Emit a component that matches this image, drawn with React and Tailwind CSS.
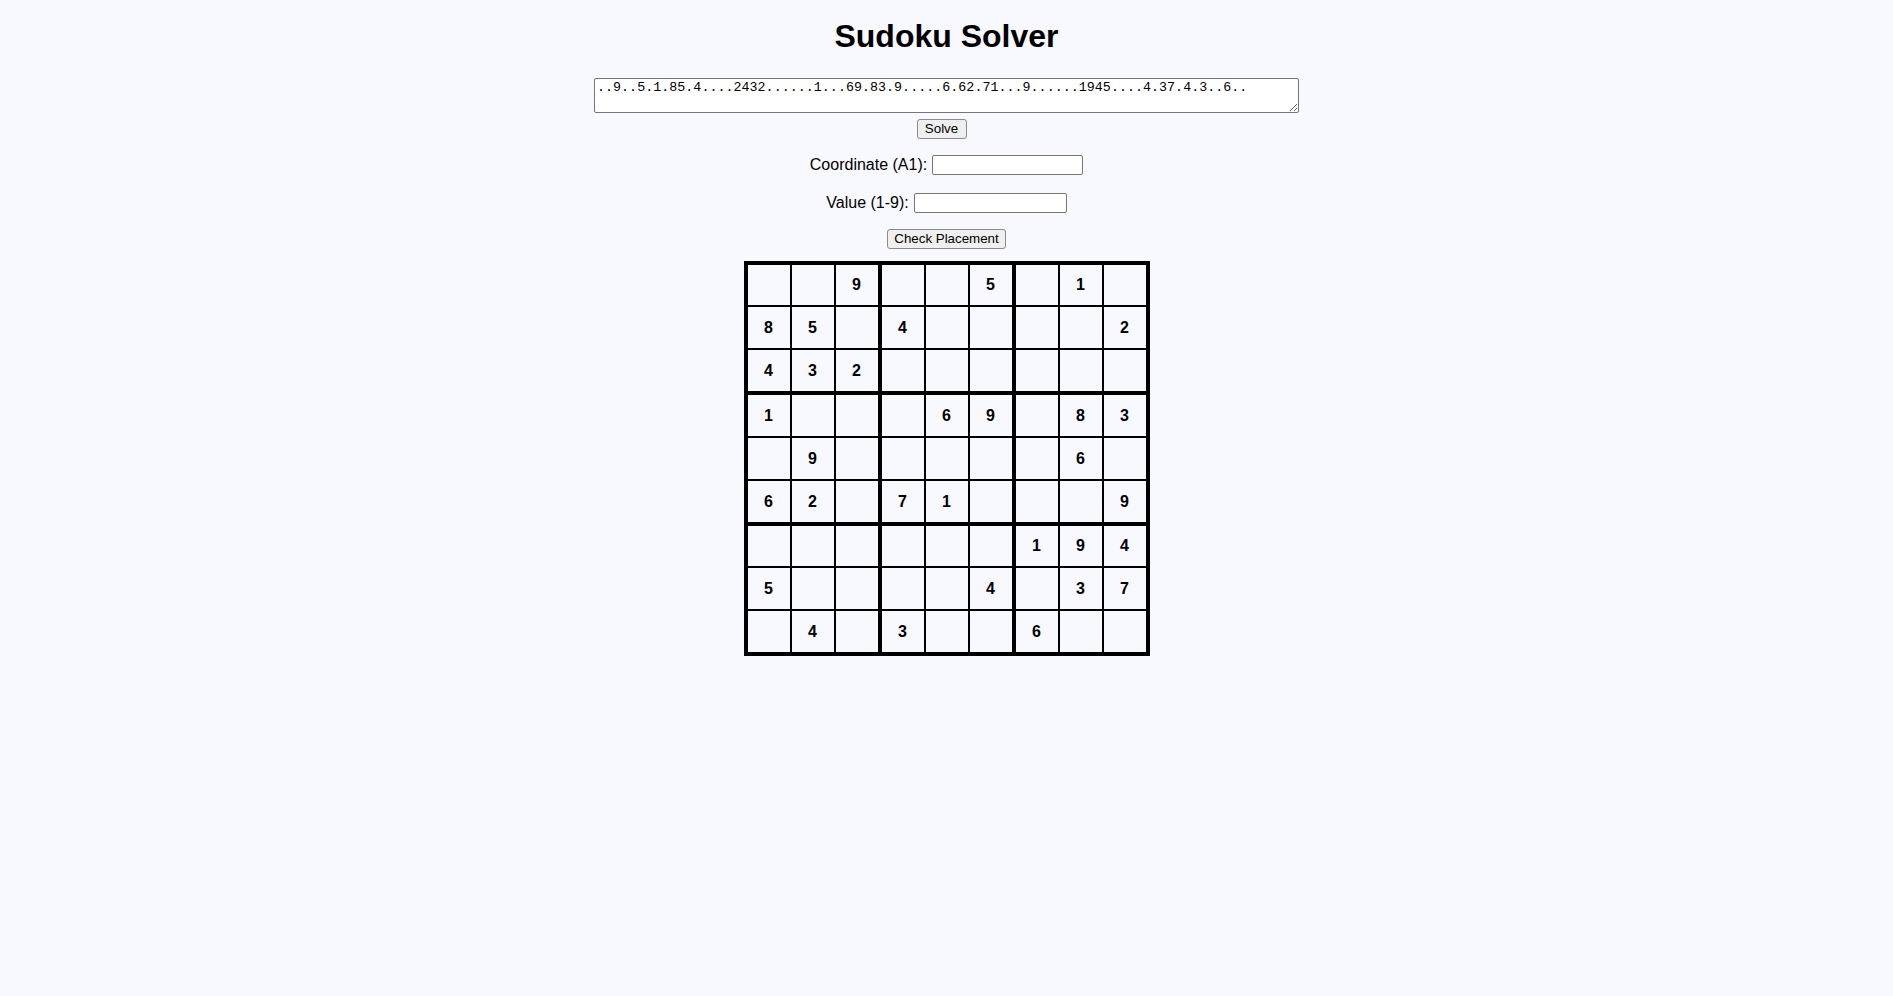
import React, { useState } from "react";

const puzzle =
  "..9..5.1.85.4....2432......1...69.83.9.....6.62.71...9......1945....4.37.4.3..6..";

const rowHeights = ["h-[40px]", "h-[41px]", "h-[41px]", "h-[41px]", "h-[41px]", "h-[41px]", "h-[40px]", "h-[41px]", "h-[41px]"];

const Cell = ({ value, row, col }) => {
  // thick borders between the 3x3 boxes
  let right = "border-r-2";
  if (col === 2 || col === 5) right = "border-r-4";
  if (col === 8) right = "border-r-0";
  let bottom = "border-b-2";
  if (row === 2 || row === 5) bottom = "border-b-4";
  if (row === 8) bottom = "border-b-0";

  return (
    <div
      className={`w-[42px] box-content ${rowHeights[row]} ${right} ${bottom} border-black flex items-center justify-center text-[16px] font-bold`}
    >
      {value === "." ? "" : value}
    </div>
  );
};

const App = () => {
  const [text, setText] = useState(puzzle);
  const [coordinate, setCoordinate] = useState("");
  const [value, setValue] = useState("");

  const rows = [];
  for (let r = 0; r < 9; r++) {
    rows.push(puzzle.slice(r * 9, r * 9 + 9).split(""));
  }

  return (
    <div className="min-h-screen bg-[#f8f8ff] text-black font-['Liberation_Sans',Arial,sans-serif] flex flex-col items-center">
      <h1 className="text-[32px] leading-[37px] font-bold mt-[18px]">Sudoku Solver</h1>

      {/* puzzle string */}
      <textarea
        value={text}
        onChange={(e) => setText(e.target.value)}
        rows="2"
        className="mt-[23px] w-[705px] h-[35px] bg-white border border-[#767676] rounded-[2px] px-[2px] py-[1px] font-['Liberation_Mono',monospace] text-[13.3px] leading-[15px] tracking-[0.05px] resize-y outline-none"
      ></textarea>

      <button className="mt-[6px] mr-[10px] w-[50px] h-[20px] bg-[#efefef] border border-[#8a8a8a] rounded-[3px] text-[13.33px] leading-[16px]">
        Solve
      </button>

      {/* placement check */}
      <div className="mt-[16px] flex items-center gap-[5px] text-[16px] leading-[20px]">
        <label htmlFor="coord">Coordinate (A1):</label>
        <input
          id="coord"
          value={coordinate}
          onChange={(e) => setCoordinate(e.target.value)}
          className="w-[151px] h-[20px] bg-white border border-[#767676] rounded-[2px] outline-none text-[13.33px] px-[2px]"
        />
      </div>

      <div className="mt-[18px] flex items-center gap-[5px] text-[16px] leading-[20px]">
        <label htmlFor="val">Value (1-9):</label>
        <input
          id="val"
          value={value}
          onChange={(e) => setValue(e.target.value)}
          className="w-[153px] h-[20px] bg-white border border-[#767676] rounded-[2px] outline-none text-[13.33px] px-[2px]"
        />
      </div>

      <button className="mt-[16px] w-[119px] h-[20px] bg-[#efefef] border border-[#8a8a8a] rounded-[3px] text-[13.33px] leading-[16px]">
        Check Placement
      </button>

      {/* board */}
      <div className="mt-[12px] border-4 border-black flex flex-col">
        {rows.map((cells, r) => (
          <div key={r} className="flex">
            {cells.map((v, c) => (
              <Cell key={c} value={v} row={r} col={c} />
            ))}
          </div>
        ))}
      </div>
    </div>
  );
};

export default App;
